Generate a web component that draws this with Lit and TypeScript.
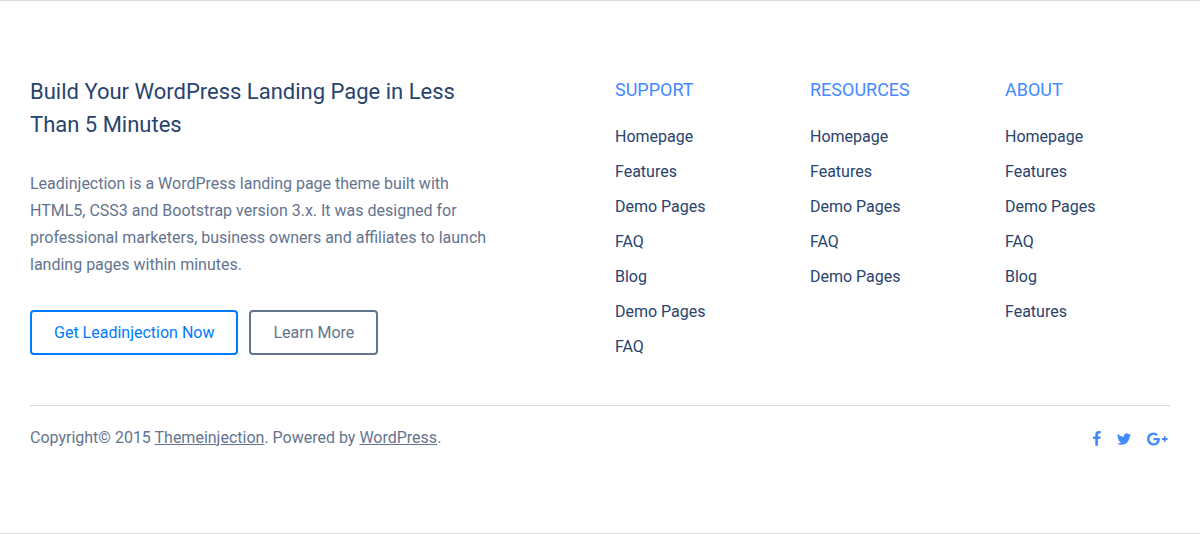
import { LitElement, html, css, svg } from "lit";
import { customElement } from "lit/decorators.js";

const columns = [
  { title: "SUPPORT", links: ["Homepage", "Features", "Demo Pages", "FAQ", "Blog", "Demo Pages", "FAQ"] },
  { title: "RESOURCES", links: ["Homepage", "Features", "Demo Pages", "FAQ", "Demo Pages"] },
  { title: "ABOUT", links: ["Homepage", "Features", "Demo Pages", "FAQ", "Blog", "Features"] },
];

const socials = [
  {
    name: "Facebook",
    box: "478 0 896 1792",
    width: 8,
    shape: svg`<path d="M1343 12v264h-157q-86 0-116 36t-30 108v189h293l-39 296h-254v759h-306v-759h-255v-296h255v-218q0-186 104-288.5t277-102.5q147 0 228 12z"/>`,
  },
  {
    name: "Twitter",
    box: "112 0 1568 1792",
    width: 14,
    shape: svg`<path d="M1684 408q-67 98-162 167 1 14 1 42 0 130-38 259.5t-115.5 248.5-184.5 210.5-258 146-323 54.5q-271 0-496-145 35 4 78 4 225 0 401-138-105-2-188-64.5t-114-159.5q33 5 61 5 43 0 85-11-112-23-185.5-111.5t-73.5-205.5v-4q68 38 146 41-66-44-105-115t-39-154q0-88 44-163 121 149 294.5 238.5t371.5 99.5q-8-38-8-74 0-134 94.5-228.5t228.5-94.5q140 0 236 102 109-21 205-78-37 115-142 178 93-10 186-50z"/>`,
  },
  {
    name: "Google Plus",
    box: "0 0 2352 1792",
    width: 21,
    shape: svg`<path d="M1437 913q0 208-87 370.5t-248 254-369 91.5q-149 0-285-58t-234-156-156-234-58-285 58-285 156-234 234-156 285-58q286 0 491 192l-199 191q-117-113-292-113-123 0-227.5 62t-165.5 168.5-61 232.5 61 232.5 165.5 168.5 227.5 62q83 0 152.5-23t114.5-57.5 78.5-78.5 49-83 21.5-74h-416v-252h692q12 63 12 122zm867-122v210h-209v209h-210v-209h-209v-210h209v-209h210v209h209z"/>`,
  },
];

@customElement("app-root")
export class AppRoot extends LitElement {
  static styles = css`
    :host {
      display: block;
      background: #fff;
      color: #64748f;
      font: 16px/27px Roboto, sans-serif;
    }
    * {
      box-sizing: border-box;
    }
    .footer {
      border-top: 1px solid #d9dddd;
      border-bottom: 1px solid #d9d9d9;
      padding: 74px 15px 82px;
    }
    .container {
      max-width: 1170px;
      margin: 0 auto;
    }
    .main {
      display: grid;
      grid-template-columns: repeat(12, minmax(0, 1fr));
    }
    .intro {
      grid-column: span 5;
      padding: 0 15px;
    }
    .intro h2 {
      margin: 0 0 29px;
      font-size: 22px;
      line-height: 33px;
      font-weight: 400;
      color: #29436d;
    }
    .intro p {
      margin: 0 0 32px;
    }
    .actions {
      display: flex;
      gap: 11px;
    }
    .btn {
      height: 45px;
      padding: 0 22px;
      border: 2px solid currentColor;
      border-radius: 4px;
      background: transparent;
      color: #64748f;
      font: inherit;
      white-space: nowrap;
      cursor: pointer;
    }
    .primary {
      color: #007bff;
    }
    .column {
      grid-column: span 2;
      padding: 0 15px;
    }
    .first {
      grid-column: 7 / span 2;
    }
    .column h3 {
      margin: 0 0 18px;
      font-size: 18px;
      line-height: 30px;
      font-weight: 400;
      color: #448aff;
    }
    .column ul {
      list-style: none;
      margin: 0;
      padding: 0;
    }
    .column li {
      margin-bottom: 8px;
    }
    .column a {
      color: #29436d;
      text-decoration: none;
    }
    .bottom {
      display: flex;
      justify-content: space-between;
      align-items: center;
      margin: 37px 15px 0;
      padding-top: 18px;
      border-top: 1px solid #d9dbdd;
    }
    .copy {
      margin: 0;
    }
    .copy a {
      color: inherit;
    }
    .social {
      display: flex;
      align-items: center;
      gap: 16px;
      padding: 2px 2px 0 0;
    }
    .social a {
      display: flex;
      color: #448aff;
    }
    .social svg {
      display: block;
      height: 16px;
      fill: currentColor;
    }
  `;

  render() {
    return html`
      <footer class="footer">
        <div class="container">
          <div class="main">
            <section class="intro">
              <h2>Build Your WordPress Landing Page in Less Than 5 Minutes</h2>
              <p>
                Leadinjection is a WordPress landing page theme built with HTML5, CSS3 and Bootstrap
                version 3.x. It was designed for professional marketers, business owners and
                affiliates to launch landing pages within minutes.
              </p>
              <div class="actions">
                <button class="btn primary" type="button">Get Leadinjection Now</button>
                <button class="btn" type="button">Learn More</button>
              </div>
            </section>
            ${columns.map(
              (c, i) => html`
                <nav class="column ${i === 0 ? "first" : ""}" aria-label=${c.title}>
                  <h3>${c.title}</h3>
                  <ul>
                    ${c.links.map((l) => html`<li><a href="#">${l}</a></li>`)}
                  </ul>
                </nav>
              `
            )}
          </div>
          <div class="bottom">
            <p class="copy">
              Copyright© 2015 <a href="#">Themeinjection</a>. Powered by <a href="#">WordPress</a>.
            </p>
            <div class="social">
              ${socials.map(
                (s) => html`<a href="#" aria-label=${s.name}
                  ><svg viewBox=${s.box} width=${s.width} height="16" aria-hidden="true">${s.shape}</svg></a
                >`
              )}
            </div>
          </div>
        </div>
      </footer>
    `;
  }
}
